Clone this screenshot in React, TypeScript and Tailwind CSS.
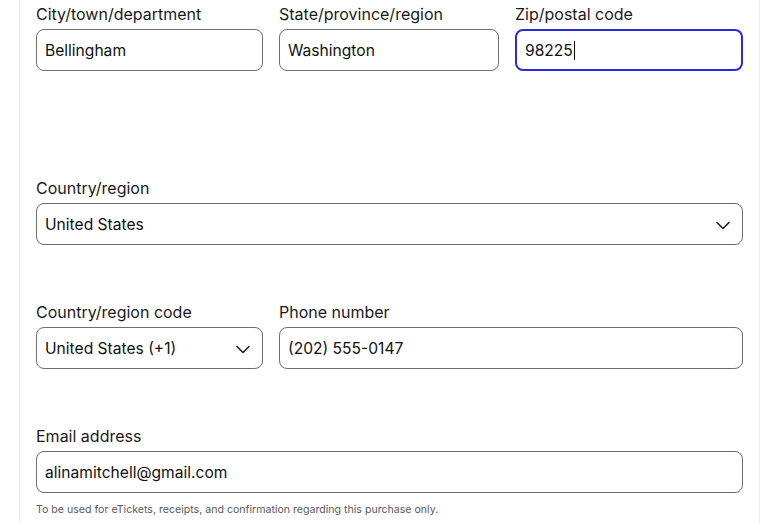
import React from "react";

function Chevron() {
  return (
    <svg width="16" height="16" viewBox="0 0 16 16" fill="none" className="shrink-0">
      <path d="M2 5.5 L8 11.5 L14 5.5" stroke="#1e1e1e" strokeWidth="1.6" strokeLinecap="round" strokeLinejoin="round" />
    </svg>
  );
}

function Field({ label, value, focused, select }: { label: string; value: string; focused?: boolean; select?: boolean }) {
  return (
    <div className="flex flex-col gap-[5px]">
      <label className="text-[16px] leading-[20px] text-[#1a1a1a]">{label}</label>
      <div
        className={`flex h-[42px] items-center justify-between rounded-[8px] pl-[8px] pr-[11px] pt-[1px] text-[15.6px] text-[#111] ${
          focused ? "border-2 border-[#2b2bd6] pl-[7px]" : "border border-[#6f6f6f]"
        }`}
      >
        <span className="flex items-center">
          {value}
          {focused && <span className="ml-[1px] inline-block h-[19px] w-px bg-black" />}
        </span>
        {select && <Chevron />}
      </div>
    </div>
  );
}

export default function App() {
  return (
    <div className="h-[523px] w-[777px] overflow-hidden bg-white" style={{ fontFamily: "Inter, 'Liberation Sans', sans-serif" }}>
      <div className="ml-[19px] h-full w-[741px] border-x border-[#ebebeb] px-4 pt-[4px]">
        <div className="grid grid-cols-[227px_1fr_228px] gap-4">
          <Field label="City/town/department" value="Bellingham" />
          <Field label="State/province/region" value="Washington" />
          <Field label="Zip/postal code" value="98225" focused />
        </div>

        <div className="mt-[107px]">
          <Field label="Country/region" value="United States" select />
        </div>

        <div className="mt-[57px] grid grid-cols-[227px_1fr] gap-4">
          <Field label="Country/region code" value="United States (+1)" select />
          <Field label="Phone number" value="(202) 555-0147" />
        </div>

        <div className="mt-[57px]">
          <Field label="Email address" value="alinamitchell@gmail.com" />
          <p className="mt-[10px] text-[10.6px] leading-[14px] text-[#5a5a5a]">
            To be used for eTickets, receipts, and confirmation regarding this purchase only.
          </p>
        </div>
      </div>
    </div>
  );
}
